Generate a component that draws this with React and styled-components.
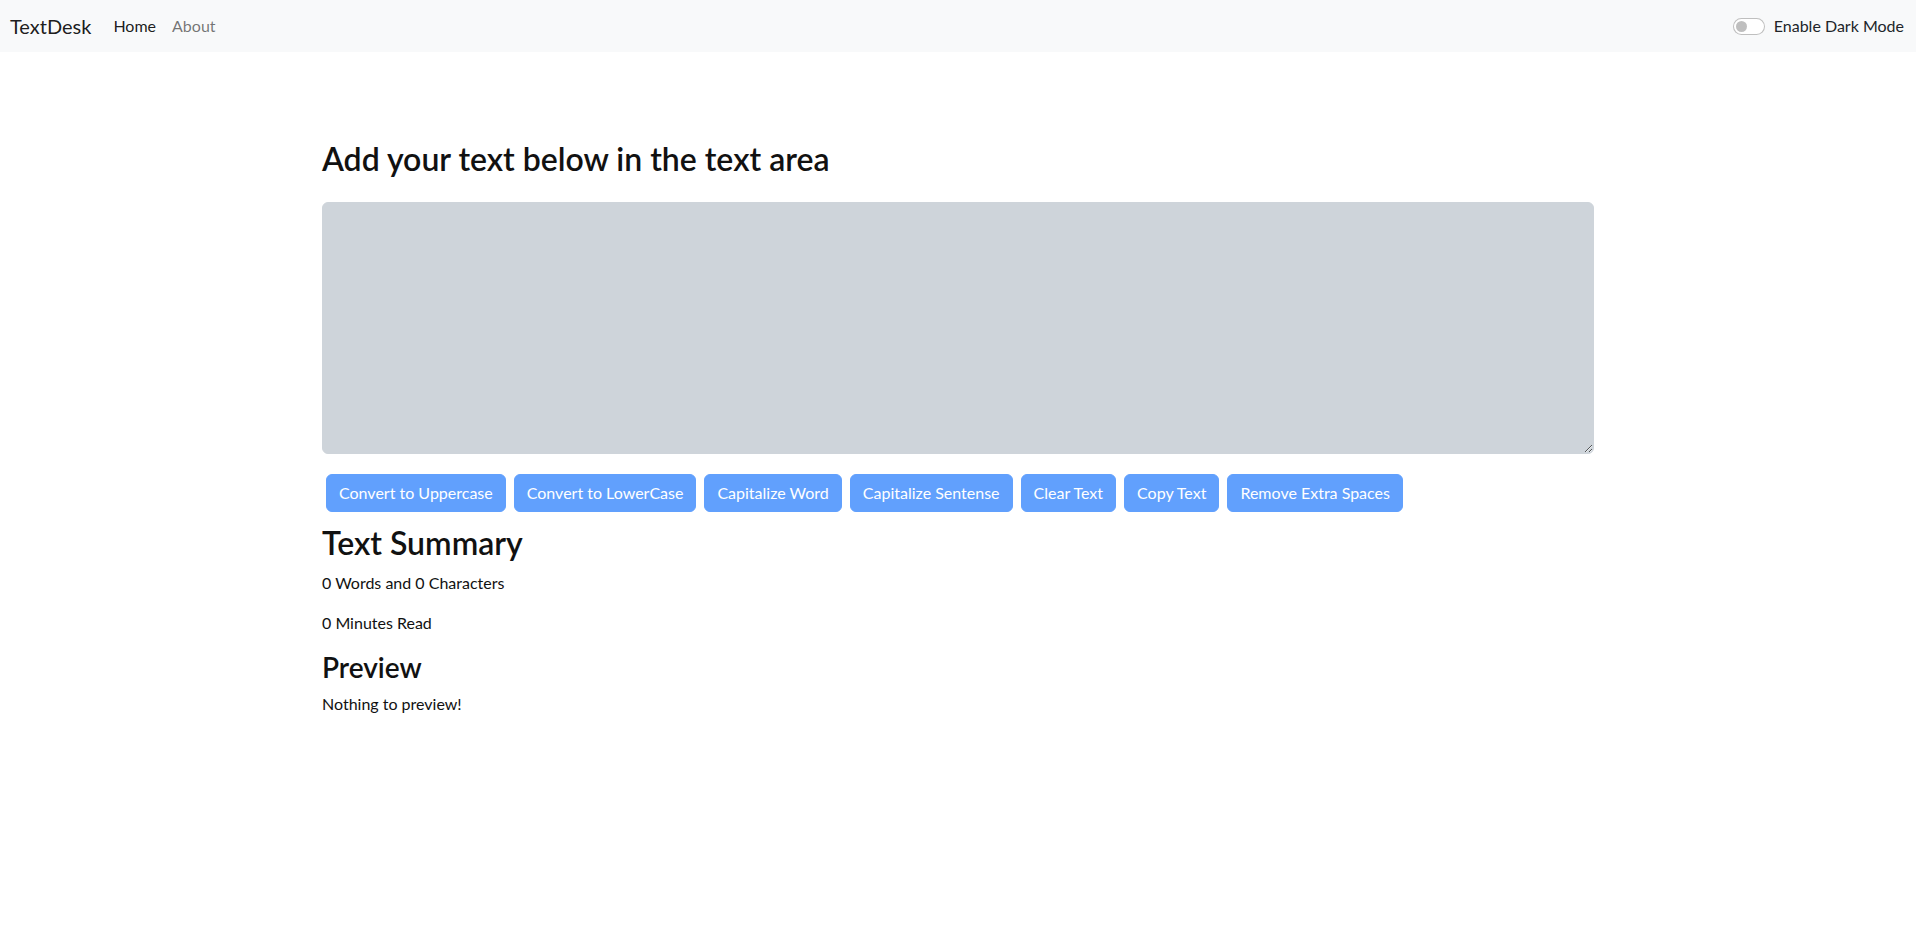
import React from 'react'
import styled, { createGlobalStyle } from 'styled-components'

const GlobalStyle = createGlobalStyle`
    body {
        margin:0;
        background:#fff;
        color:#212529;
        font-family: Lato, 'Noto Sans', sans-serif;
        font-size:16px;
        line-height:1.5;
    }
    * { box-sizing:border-box; }
`;

const NavBar = styled.nav`
    height:52px;
    background:#f8f9fa;
    display:flex;
    align-items:center;
    padding:0 12px 0 10px;
`;

const Brand = styled.a`
    font-size:20px;
    color:rgba(0,0,0,0.9);
    margin-right:14px;
    text-decoration:none;
`;

const NavLink = styled.a`
    padding:8px;
    font-size:16px;
    text-decoration:none;
    color:${p => p.active ? 'rgba(0,0,0,0.9)' : 'rgba(0,0,0,0.55)'};
`;

const SwitchWrap = styled.label`
    margin-left:auto;
    display:flex;
    align-items:center;
    gap:9px;
    color:#212529;
`;

const Toggle = styled.span`
    width:32px;
    height:17px;
    border:1px solid rgba(0,0,0,0.25);
    border-radius:16px;
    background:#fff;
    display:flex;
    align-items:center;
    padding-left:2px;
    &::after {
        content:'';
        width:11px;
        height:11px;
        border-radius:50%;
        background:rgba(0,0,0,0.25);
    }
`;

const Container = styled.main`
    width:1272px;
    margin:0 auto;
    padding-top:88px;
`;

const Heading = styled.h2`
    font-size:32px;
    font-weight:600;
    line-height:1.2;
    color:#111;
    margin:0 0 24px;
`;

const TextBox = styled.textarea`
    display:block;
    width:100%;
    height:252px;
    background:#ced4da;
    border:1px solid #ced4da;
    border-radius:6px;
    padding:6px 12px;
    font-family:inherit;
    font-size:16px;
    color:#212529;
    margin-bottom:16px;
    outline:none;
`;

const ButtonRow = styled.div`
    display:flex;
    flex-wrap:wrap;
`;

const Button = styled.button`
    margin:4px;
    padding:6px 12px;
    font-family:inherit;
    font-size:16px;
    line-height:1.5;
    color:#fff;
    background:#0d6efd;
    border:1px solid #0d6efd;
    border-radius:6px;
    &:disabled { opacity:0.65; }
`;

const Summary = styled.section`
    margin-top:8px;
`;

const SubHeading = styled.h2`
    font-size:${p => p.small ? '28px' : '32px'};
    font-weight:600;
    line-height:1.2;
    color:#111;
    margin:${p => p.small ? '4px' : '0'} 0 8px;
`;

const Para = styled.p`
    margin:0 0 ${p => p.last ? '0' : '16px'};
    color:#111;
`;

const buttons = [
    'Convert to Uppercase',
    'Convert to LowerCase',
    'Capitalize Word',
    'Capitalize Sentense',
    'Clear Text',
    'Copy Text',
    'Remove Extra Spaces',
];

export default function App() {
    return (
        <>
            <GlobalStyle />
            <NavBar>
                <Brand href="#">TextDesk</Brand>
                <NavLink href="#" active>Home</NavLink>
                <NavLink href="#">About</NavLink>
                <SwitchWrap>
                    <Toggle />
                    Enable Dark Mode
                </SwitchWrap>
            </NavBar>
            <Container>
                <Heading>Add your text below in the text area</Heading>
                <TextBox rows={10} />
                <ButtonRow>
                    {buttons.map(b => <Button key={b} disabled>{b}</Button>)}
                </ButtonRow>
                <Summary>
                    <SubHeading>Text Summary</SubHeading>
                    <Para>0 Words and 0 Characters</Para>
                    <Para>0 Minutes Read</Para>
                    <SubHeading small>Preview</SubHeading>
                    <Para last>Nothing to preview!</Para>
                </Summary>
            </Container>
        </>
    )
}
